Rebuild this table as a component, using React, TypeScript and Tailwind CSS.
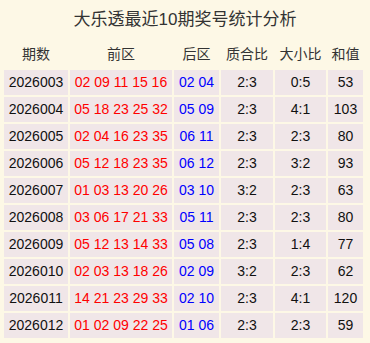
const rows = [
  ["2026003", "02 09 11 15 16", "02 04", "2:3", "0:5", "53"],
  ["2026004", "05 18 23 25 32", "05 09", "2:3", "4:1", "103"],
  ["2026005", "02 04 16 23 35", "06 11", "2:3", "2:3", "80"],
  ["2026006", "05 12 18 23 35", "06 12", "2:3", "3:2", "93"],
  ["2026007", "01 03 13 20 26", "03 10", "3:2", "2:3", "63"],
  ["2026008", "03 06 17 21 33", "05 11", "2:3", "2:3", "80"],
  ["2026009", "05 12 13 14 33", "05 08", "2:3", "1:4", "77"],
  ["2026010", "02 03 13 18 26", "02 09", "3:2", "2:3", "62"],
  ["2026011", "14 21 23 29 33", "02 10", "2:3", "4:1", "120"],
  ["2026012", "01 02 09 22 25", "01 06", "2:3", "2:3", "59"],
];

const headers = ["期数", "前区", "后区", "质合比", "大小比", "和值"];

export default function App() {
  return (
    <div
      className="w-[370px] h-[343px] bg-[#fdf8e6] px-[4px] text-[14px] text-[#111]"
      style={{ fontFamily: '"Liberation Sans", "Noto Sans CJK SC", sans-serif' }}
    >
      <div className="h-[40px] flex items-center justify-center text-[17px] text-[#333]">
        大乐透最近10期奖号统计分析
      </div>

      <div className="grid grid-cols-[64px_102px_45px_52px_51px_35px] grid-rows-[28px_repeat(10,25px)] gap-[2px]">
        {headers.map((h) => (
          <div
            key={h}
            className="flex items-center justify-center text-[#333] whitespace-nowrap"
          >
            {h}
          </div>
        ))}

        {rows.map((r) => (
          <div key={r[0]} className="contents">
            <div className="bg-[#f0e6e8] flex items-center justify-center">{r[0]}</div>
            <div className="bg-[#f0e6e8] flex items-center justify-center text-[#ff0000] whitespace-pre">
              {r[1]}
            </div>
            <div className="bg-[#f0e6e8] flex items-center justify-center text-[#0000ff] whitespace-pre">
              {r[2]}
            </div>
            <div className="bg-[#f0e6e8] flex items-center justify-center">{r[3]}</div>
            <div className="bg-[#f0e6e8] flex items-center justify-center">{r[4]}</div>
            <div className="bg-[#f0e6e8] flex items-center justify-center">{r[5]}</div>
          </div>
        ))}
      </div>
    </div>
  );
}
